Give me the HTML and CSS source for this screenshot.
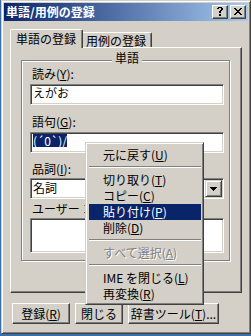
FILE: index.html
```html
<!DOCTYPE html>
<html lang="ja">
<head>
<meta charset="utf-8">
<title>単語/用例の登録</title>
<link rel="stylesheet" href="styles.css">
</head>
<body>
<div class="window">
  <div class="titlebar">
    <span class="title">単語/用例の登録</span>
    <div class="caption-btns">
      <span class="cap-btn"><svg width="6" height="9" viewBox="0 0 6 9" shape-rendering="crispEdges"><path d="M1 0h4v1h-4z M0 1h2v1h-2z M4 1h2v2h-2z M3 3h2v1h-2z M2 4h2v2h-2z M2 7h2v2h-2z" fill="#000"/></svg></span>
      <span class="cap-btn"><svg width="8" height="7" viewBox="0 0 8 7" shape-rendering="crispEdges"><path d="M0 0h2v1h-2z M6 0h2v1h-2z M1 1h2v1h-2z M5 1h2v1h-2z M2 2h4v1h-4z M3 3h2v1h-2z M2 4h4v1h-4z M1 5h2v1h-2z M5 5h2v1h-2z M0 6h2v1h-2z M6 6h2v1h-2z" fill="#000"/></svg></span>
    </div>
  </div>
  <div class="client">
    <div class="tabs">
      <div class="tab active">単語の登録</div>
      <div class="tab">用例の登録</div>
    </div>
    <div class="panel">
      <div class="group">
        <div class="legend">単語</div>
        <div class="lbl l1">読み(<u>Y</u>):</div>
        <div class="field f1">えがお</div>
        <div class="lbl l2">語句(<u>G</u>):</div>
        <div class="field f2"><span class="sel">(´0`)/</span></div>
        <div class="lbl l3">品詞(<u>I</u>):</div>
        <div class="combo">
          <span class="combo-text">名詞</span>
          <span class="combo-btn"><svg width="7" height="4" viewBox="0 0 7 4" shape-rendering="crispEdges"><path d="M0 0h7v1h-7z M1 1h5v1h-5z M2 2h3v1h-3z M3 3h1v1h-1z" fill="#000"/></svg></span>
        </div>
        <div class="lbl l4">ユーザー コメント(<u>C</u>):</div>
        <div class="memo"></div>
      </div>
    </div>
    <div class="buttons">
      <div class="btn b1">登録(<u>R</u>)</div>
      <div class="btn b2">閉じる</div>
      <div class="btn b3">辞書ツール(<u>T</u>)...</div>
    </div>
  </div>
</div>
<div class="menu">
  <div class="mi">元に戻す(<u>U</u>)</div>
  <div class="sep"></div>
  <div class="mi">切り取り(<u>T</u>)</div>
  <div class="mi">コピー(<u>C</u>)</div>
  <div class="mi hl">貼り付け(<u>P</u>)</div>
  <div class="mi">削除(<u>D</u>)</div>
  <div class="sep"></div>
  <div class="mi dis">すべて選択(<u>A</u>)</div>
  <div class="sep"></div>
  <div class="mi">IME を閉じる(<u>L</u>)</div>
  <div class="mi">再変換(<u>R</u>)</div>
</div>
</body>
</html>
```
FILE: styles.css
```css
* { box-sizing: border-box; }
html, body { margin: 0; padding: 0; }
body {
  background: #3a6ea5;
  width: 251px;
  height: 336px;
  overflow: hidden;
  position: relative;
  font-family: "Noto Sans CJK JP", "Noto Sans", sans-serif;
  font-size: 12px;
  color: #000;
}
u { text-decoration: underline; text-underline-offset: 1px; }

.window {
  margin-left: 1px;
  width: 250px;
  height: 334px;
  background: #d4d0c8;
  border: 1px solid;
  border-color: #d4d0c8 #404040 #404040 #d4d0c8;
  box-shadow: inset 1px 1px #fff, inset -1px -1px #808080;
  padding: 2px;
}

.titlebar {
  height: 18px;
  background: linear-gradient(to right, #0a246a, #a6caf0);
  display: flex;
  align-items: center;
  justify-content: space-between;
  padding: 0 2px;
}
.title { color: #fff; font-weight: bold; line-height: 14px; }
.caption-btns { display: flex; gap: 2px; }
.cap-btn {
  width: 16px;
  height: 14px;
  background: #d4d0c8;
  border: 1px solid;
  border-color: #fff #404040 #404040 #fff;
  box-shadow: inset -1px -1px #808080;
  display: flex;
  align-items: center;
  justify-content: center;
  padding-right: 1px;
  padding-bottom: 1px;
}
.cap-btn svg { display: block; }

.client { padding-top: 8px; }

.tabs {
  display: flex;
  align-items: flex-end;
  height: 18px;
  padding-left: 6px;
  position: relative;
  z-index: 1;
}
.tab {
  background: #d4d0c8;
  border-top: 1px solid #fff;
  border-left: 1px solid #fff;
  border-right: 1px solid #404040;
  box-shadow: inset -1px 0 #808080;
  border-radius: 2px 2px 0 0;
  height: 15px;
  line-height: 13px;
  padding: 1px 5px 0 4px;
  white-space: nowrap;
}
.tab.active {
  height: 19px;
  line-height: 15px;
  margin-bottom: -1px;
  margin-right: -2px;
  padding: 1px 6px 0 5px;
  position: relative;
  z-index: 2;
}

.panel {
  margin: 0 6px;
  height: 246px;
  border: 1px solid;
  border-color: #fff #404040 #404040 #fff;
  box-shadow: inset -1px -1px #808080;
  padding-top: 12px;
}

.group {
  margin: 0 11px 0 10px;
  border: 1px solid #808080;
  box-shadow: inset 1px 1px #fff, 1px 1px #fff;
  padding: 0 5px 7px 8px;
}
.legend {
  width: fit-content;
  margin: -10px auto 0;
  padding: 0 3px;
  background: #d4d0c8;
  line-height: 14px;
}
.lbl { line-height: 14px; padding-left: 2px; white-space: nowrap; }
.l1 { margin-top: 2px; }
.l2 { margin-top: 10px; }
.l3 { margin-top: 9px; }
.l4 { margin-top: 3px; }

.field, .combo, .memo {
  background: #fff;
  border: 1px solid;
  border-color: #808080 #fff #fff #808080;
  box-shadow: inset 1px 1px #404040, inset -1px -1px #d4d0c8;
}
.field {
  height: 21px;
  margin-top: 3px;
  padding: 1px 2px 0 2px;
  line-height: 13px;
  white-space: nowrap;
}
.sel {
  display: inline-block;
  line-height: 13px;
  background: #0a246a;
  color: #fff;
}
.combo {
  height: 21px;
  margin-top: 2px;
  padding: 1px;
  display: flex;
}
.combo-text { line-height: 15px; padding-left: 1px; }
.combo-btn {
  margin-left: auto;
  width: 17px;
  height: 17px;
  background: #d4d0c8;
  border: 1px solid;
  border-color: #d4d0c8 #404040 #404040 #d4d0c8;
  box-shadow: inset 1px 1px #fff, inset -1px -1px #808080;
  display: flex;
  align-items: center;
  justify-content: center;
}
.combo-btn svg { display: block; }
.memo { height: 35px; margin-top: 2px; }

.buttons {
  display: flex;
  gap: 5px;
  padding-left: 8px;
  margin-top: 10px;
}
.btn {
  height: 21px;
  border: 1px solid;
  border-color: #fff #404040 #404040 #fff;
  box-shadow: inset -1px -1px #808080;
  line-height: 19px;
  text-align: center;
  white-space: nowrap;
}
.b1 { width: 58px; }
.b2 { width: 48px; }
.b3 { width: 91px; }

.menu {
  position: absolute;
  left: 85px;
  top: 142px;
  width: 119px;
  background: #d4d0c8;
  border: 1px solid;
  border-color: #d4d0c8 #404040 #404040 #d4d0c8;
  box-shadow: inset 1px 1px #fff, inset -1px -1px #808080;
  padding: 4px 2px 2px 3px;
  z-index: 10;
}
.mi {
  height: 16px;
  line-height: 16px;
  padding-left: 14px;
  white-space: nowrap;
}
.mi.hl { background: #0a246a; color: #fff; }
.mi.dis { color: #808080; text-shadow: 1px 1px 0 #fff; }
.sep { height: 9px; padding-top: 3px; }
.sep::before {
  content: "";
  display: block;
  border-top: 1px solid #808080;
  border-bottom: 1px solid #fff;
}
```
